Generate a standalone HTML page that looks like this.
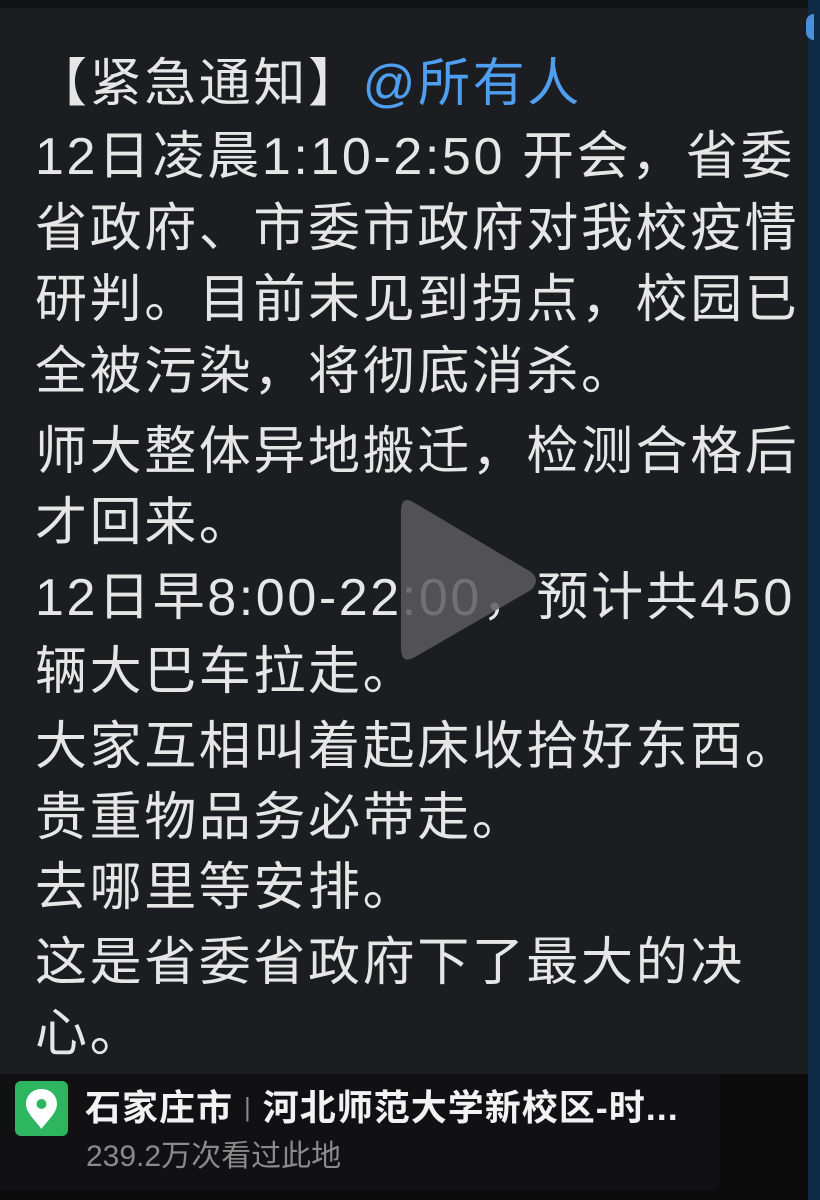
<!DOCTYPE html>
<html><head><meta charset="utf-8"><style>
html,body{margin:0;padding:0}
body{width:820px;height:1200px;background:#1c1d21;position:relative;overflow:hidden;font-family:"Liberation Sans","Noto Sans CJK SC",sans-serif}
.top{position:absolute;left:0;top:0;width:820px;height:8px;background:#111214}
.side{position:absolute;left:808px;top:0;width:12px;height:1200px;background:#0e2a44}
.l{position:absolute;left:35px;color:#e6e6e6;font-size:52px;line-height:60px;white-space:nowrap;letter-spacing:2.6px}
.b{color:#4f9ff0}
.bot{position:absolute;left:0;top:1074px;width:808px;height:126px;background:#0b0b0c}
.card{position:absolute;left:0;top:1074px;width:720px;height:116px;background:#111113;border-radius:0 0 8px 0}
.ic{position:absolute;left:15px;top:1081px;width:53px;height:55px;background:#2db55f;border-radius:6px}
.t1{position:absolute;left:85px;top:1084px;color:#f2f2f2;font-size:36px;font-weight:bold;line-height:48px;white-space:nowrap;letter-spacing:1px}
.t2{position:absolute;left:86px;top:1137px;color:#8a8a8a;font-size:30px;line-height:40px;white-space:nowrap}
</style></head><body>
<div class="top"></div>
<div class="l" style="top:54px">【紧急通知】<span class="b">@所有人</span></div>
<div class="l" style="top:127px">12日凌晨1:10-2:50 开会，省委</div>
<div class="l" style="top:199px">省政府、市委市政府对我校疫情</div>
<div class="l" style="top:270px">研判。目前未见到拐点，校园已</div>
<div class="l" style="top:342px">全被污染，将彻底消杀。</div>
<div class="l" style="top:422px">师大整体异地搬迁，检测合格后</div>
<div class="l" style="top:493px">才回来。</div>
<div class="l" style="top:568px">12日早8:00-22:00，预计共450</div>
<div class="l" style="top:642px">辆大巴车拉走。</div>
<div class="l" style="top:717px">大家互相叫着起床收拾好东西。</div>
<div class="l" style="top:788px">贵重物品务必带走。</div>
<div class="l" style="top:858px">去哪里等安排。</div>
<div class="l" style="top:933px">这是省委省政府下了最大的决</div>
<div class="l" style="top:1004px">心。</div>
<svg style="position:absolute;left:395px;top:490px" width="150" height="180"><path d="M18 12 Q6 5 6 22 L6 158 Q6 175 20 167 L136 100 Q146 90 136 82 Z" fill="rgba(92,92,94,0.85)"/></svg>
<div class="bot"></div>
<div class="card"></div>
<div class="ic"><svg width="53" height="55" viewBox="0 0 53 55"><path d="M26.5 8 C17 8 11 15 11 23 C11 32 21 40 26.5 48 C32 40 42 32 42 23 C42 15 36 8 26.5 8 Z" fill="#fff"/><circle cx="26.5" cy="23" r="5" fill="#2db55f"/></svg></div>
<div class="t1">石家庄市 <span style="color:#888;font-weight:normal;font-size:26px;position:relative;top:-4px">|</span> 河北师范大学新校区-时...</div>
<div class="t2">239.2万次看过此地</div>
<div class="side"></div>
<div style="position:absolute;left:806px;top:14px;width:8px;height:26px;background:#4a90d9;border-radius:8px 0 0 8px"></div>
</body></html>
